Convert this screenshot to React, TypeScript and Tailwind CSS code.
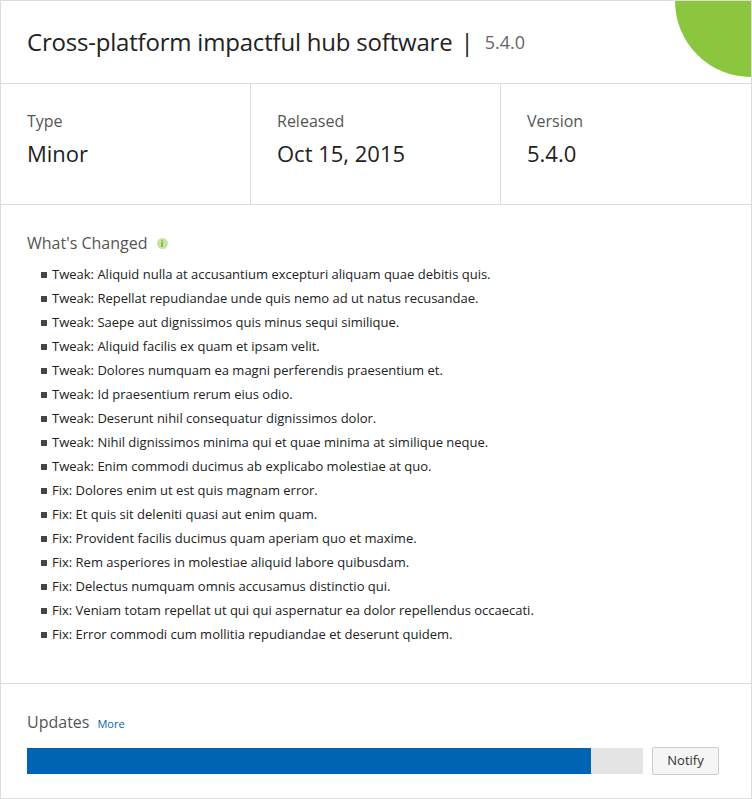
const items = [
  "Tweak: Aliquid nulla at accusantium excepturi aliquam quae debitis quis.",
  "Tweak: Repellat repudiandae unde quis nemo ad ut natus recusandae.",
  "Tweak: Saepe aut dignissimos quis minus sequi similique.",
  "Tweak: Aliquid facilis ex quam et ipsam velit.",
  "Tweak: Dolores numquam ea magni perferendis praesentium et.",
  "Tweak: Id praesentium rerum eius odio.",
  "Tweak: Deserunt nihil consequatur dignissimos dolor.",
  "Tweak: Nihil dignissimos minima qui et quae minima at similique neque.",
  "Tweak: Enim commodi ducimus ab explicabo molestiae at quo.",
  "Fix: Dolores enim ut est quis magnam error.",
  "Fix: Et quis sit deleniti quasi aut enim quam.",
  "Fix: Provident facilis ducimus quam aperiam quo et maxime.",
  "Fix: Rem asperiores in molestiae aliquid labore quibusdam.",
  "Fix: Delectus numquam omnis accusamus distinctio qui.",
  "Fix: Veniam totam repellat ut qui qui aspernatur ea dolor repellendus occaecati.",
  "Fix: Error commodi cum mollitia repudiandae et deserunt quidem.",
];

export default function App() {
  return (
    <div className="w-[752px] h-[799px] bg-white" style={{ fontFamily: '"Open Sans", sans-serif' }}>
      <div className="relative overflow-hidden border border-[#dcdcdc] h-[799px] flex flex-col text-[#222]">
        <div className="absolute -top-[76px] -right-[76px] w-[152px] h-[152px] rounded-full bg-[#8cc63f]" />
        <div className="h-[83px] border-b border-[#dcdcdc] flex items-center px-[26px]">
          <span className="text-[24px] leading-none tracking-[-0.2px]">Cross-platform impactful hub software</span>
          <span className="text-[24px] leading-none ml-[8px]">|</span>
          <span className="text-[18px] leading-none text-[#666] ml-[11px]">5.4.0</span>
        </div>
        <div className="h-[121px] border-b border-[#dcdcdc] grid grid-cols-3">
          {[["Type", "Minor"], ["Released", "Oct 15, 2015"], ["Version", "5.4.0"]].map(([l, v], i) => (
            <div key={l} className={`pl-[26px] pt-[26px] ${i < 2 ? "border-r border-[#dcdcdc]" : ""}`}>
              <div className="text-[16px] leading-[22px] text-[#555]">{l}</div>
              <div className="text-[22px] leading-[30px] mt-[6px]">{v}</div>
            </div>
          ))}
        </div>
        <div className="h-[479px] border-b border-[#dcdcdc] px-[26px] pt-[27px]">
          <div className="flex items-center">
            <span className="text-[16px] leading-[22px] text-[#555]">What's Changed</span>
            <span className="ml-[9px] w-[11px] h-[11px] rounded-full bg-[#c5e3a3] text-[#6aa52a] text-[8px] leading-[11px] text-center font-bold">i</span>
          </div>
          <ul className="mt-[9px] pl-[14px]">
            {items.map((t) => (
              <li key={t} className="flex items-center h-[24px] text-[13px] text-[#222]">
                <span className="w-[6px] h-[6px] bg-[#444] mr-[5px] shrink-0" />
                {t}
              </li>
            ))}
          </ul>
        </div>
        <div className="flex-1 px-[26px] pt-[26px]">
          <div className="flex items-baseline">
            <span className="text-[16px] text-[#555]">Updates</span>
            <span className="text-[11px] text-[#0a63b1] ml-[8px]">More</span>
          </div>
          <div className="flex items-center mt-[13px]">
            <div className="w-[616px] h-[26px] bg-[#e4e4e4]">
              <div className="h-full bg-[#0064b4] w-[564px]" />
            </div>
            <button className="ml-[9px] w-[67px] h-[28px] border border-[#ccc] rounded-[2px] bg-[#f5f5f5] text-[13px] text-[#333]">Notify</button>
          </div>
        </div>
      </div>
    </div>
  );
}
